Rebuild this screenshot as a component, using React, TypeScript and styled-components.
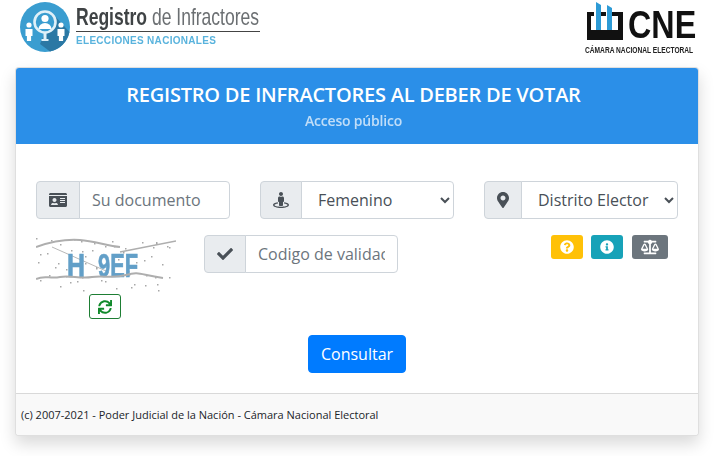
import styled, { createGlobalStyle } from "styled-components";
import {
  FaBalanceScale,
  FaCheck,
  FaIdCard,
  FaInfoCircle,
  FaMapMarkerAlt,
  FaQuestionCircle,
  FaStreetView,
  FaSync,
} from "react-icons/fa";

const GlobalStyle = createGlobalStyle`
  html, body {
    margin: 0;
    padding: 0;
    background: #fff;
    font-family: "Open Sans", "Liberation Sans", sans-serif;
    color: #212529;
  }
  * {
    box-sizing: border-box;
  }
`;

// pseudo random dots for the captcha noise, fixed so the picture doesn't move
const captchaDots = Array.from({ length: 58 }, (_, i) => ({
  x: (i * 37 + (i * i) % 23) % 140,
  y: 3 + ((i * 53 + (i * i * 3) % 17) % 55),
}));

function RegistroLogo() {
  return (
    <LogoLeft>
      <svg width="50" height="50" viewBox="0 0 50 50">
        <circle cx="25" cy="25" r="25" fill="#3a9dd0" />
        <path d="M20 42 L33 12 L49.5 30 A25 25 0 0 1 30 49.5 Z" fill="#2b78a4" />
        <circle cx="25" cy="20" r="10.5" fill="#3a9dd0" stroke="#dff0f8" strokeWidth="2.6" />
        <circle cx="25" cy="16.5" r="3.6" fill="#fff" />
        <path d="M18.5 27 a6.5 6 0 0 1 13 0 Z" fill="#fff" />
        <path d="M23.5 31 h3 v6 h2 v2 h-7 v-2 h2 Z" fill="#dff0f8" />
        <circle cx="9" cy="23" r="2.6" fill="#fff" />
        <path d="M5.5 27 h7 v7 h-1.4 v5 h-4.2 v-5 h-1.4 Z" fill="#fff" />
        <circle cx="41" cy="23" r="2.6" fill="#fff" />
        <path d="M37.5 27 h7 v7 h-1.4 v5 h-4.2 v-5 h-1.4 Z" fill="#fff" />
      </svg>
      <LogoWords>
        <LogoTitle>
          <LogoTitleText>
            <strong>Registro</strong> de Infractores
          </LogoTitleText>
        </LogoTitle>
        <LogoSub>ELECCIONES NACIONALES</LogoSub>
      </LogoWords>
    </LogoLeft>
  );
}

function CneLogo() {
  return (
    <LogoRight>
      <CneTop>
        <svg width="36" height="40" viewBox="0 0 36 40">
          <path d="M0 10 H36 V38 H0 Z M4 14 V28 H31 V14 Z" fill="#111" fillRule="evenodd" />
          <rect x="7" y="9" width="3" height="6" fill="#fff" />
          <rect x="19" y="9" width="3" height="6" fill="#fff" />
          <path d="M9 0 L14 3 V28 H9 Z" fill="#2d9bd6" />
          <path d="M20 3 L25 6 V28 H20 Z" fill="#2d9bd6" />
        </svg>
        <CneLetters>
          <span>CNE</span>
        </CneLetters>
      </CneTop>
      <CneCaption>
        <span>CÁMARA NACIONAL ELECTORAL</span>
      </CneCaption>
    </LogoRight>
  );
}

function Captcha() {
  return (
    <svg width="140" height="60" viewBox="0 0 140 60">
      {captchaDots.map((d, i) => (
        <rect key={i} x={d.x} y={d.y} width="1.5" height="1.5" fill="#a8a8a8" />
      ))}
      <path d="M0 12 C14 7 30 4 44 5 S72 11 84 12" fill="none" stroke="#aeaeae" strokeWidth="2" />
      <path d="M84 17 L140 6" fill="none" stroke="#aeaeae" strokeWidth="1.5" />
      <path d="M16 12 L70 36" fill="none" stroke="#b8b8b8" strokeWidth="1" />
      <text x="31" y="42" fontFamily="Liberation Sans" fontWeight="700" fontSize="33" fill="#629fc8" stroke="#629fc8" strokeWidth="0.7" textLength="18" lengthAdjust="spacingAndGlyphs">
        H
      </text>
      <text x="62" y="42" fontFamily="Liberation Sans" fontWeight="700" fontSize="33" fill="#629fc8" stroke="#629fc8" strokeWidth="0.7" textLength="40" lengthAdjust="spacingAndGlyphs">
        9EF
      </text>
      <path d="M0 44 C8 40 14 44 24 42 S44 44 56 42 S76 44 90 40 S104 40 127 43" fill="none" stroke="#aeaeae" strokeWidth="2" />
    </svg>
  );
}

export default function App() {
  return (
    <Page>
      <GlobalStyle />
      <TopBar>
        <RegistroLogo />
        <CneLogo />
      </TopBar>
      <Card>
        <CardHeader>
          <h1>REGISTRO DE INFRACTORES AL DEBER DE VOTAR</h1>
          <p>Acceso público</p>
        </CardHeader>
        <CardBody>
          <FieldRow>
            <InputGroup>
              <Addon $w={44}>
                <FaIdCard size={18} />
              </Addon>
              <TextField placeholder="Su documento" />
            </InputGroup>
            <InputGroup>
              <Addon $w={42}>
                <FaStreetView size={16} />
              </Addon>
              <SelectField defaultValue="F">
                <option value="F">Femenino</option>
                <option value="M">Masculino</option>
              </SelectField>
            </InputGroup>
            <InputGroup>
              <Addon $w={38}>
                <FaMapMarkerAlt size={16} />
              </Addon>
              <SelectField defaultValue="">
                <option value="">Distrito Elector</option>
              </SelectField>
            </InputGroup>
          </FieldRow>
          <CaptchaRow>
            <CaptchaColumn>
              <Captcha />
              <RefreshButton type="button">
                <FaSync size={14} />
              </RefreshButton>
            </CaptchaColumn>
            <InputGroup>
              <Addon $w={42}>
                <FaCheck size={16} />
              </Addon>
              <TextField placeholder="Codigo de validación" />
            </InputGroup>
            <HelpButtons>
              <SmallButton type="button" $bg="#ffc107">
                <FaQuestionCircle size={14} />
              </SmallButton>
              <SmallButton type="button" $bg="#17a2b8">
                <FaInfoCircle size={14} />
              </SmallButton>
              <SmallButton type="button" $bg="#6c757d" $wide>
                <FaBalanceScale size={18} />
              </SmallButton>
            </HelpButtons>
          </CaptchaRow>
          <SubmitRow>
            <SubmitButton type="button">Consultar</SubmitButton>
          </SubmitRow>
        </CardBody>
        <CardFooter>(c) 2007-2021 - Poder Judicial de la Nación - Cámara Nacional Electoral</CardFooter>
      </Card>
    </Page>
  );
}

const Page = styled.div`
  width: 717px;
  height: 456px;
  padding: 0 15px;
  overflow: hidden;
`;

const TopBar = styled.header`
  height: 67px;
  padding: 2px 7px 0 5px;
  display: flex;
  justify-content: space-between;
  align-items: flex-start;
  filter: blur(0.35px);
`;

const LogoLeft = styled.div`
  display: flex;
  gap: 6px;
`;

const LogoWords = styled.div`
  width: 184px;
  display: flex;
  flex-direction: column;
`;

const LogoTitle = styled.div`
  width: 184px;
  height: 30px;
  border-bottom: 1.5px solid #444;
`;

const LogoTitleText = styled.div`
  font-family: "Liberation Sans", sans-serif;
  font-size: 24px;
  line-height: 30px;
  color: #6b6f72;
  white-space: nowrap;
  transform: scaleX(0.73);
  transform-origin: left top;

  strong {
    color: #3f4345;
  }
`;

const LogoSub = styled.div`
  margin-top: 3px;
  font-family: "Liberation Sans", sans-serif;
  font-weight: 700;
  font-size: 10px;
  line-height: 12px;
  letter-spacing: 0.3px;
  color: #59b3dd;
  white-space: nowrap;
`;

const LogoRight = styled.div`
  width: 108px;
  display: flex;
  flex-direction: column;
`;

const CneTop = styled.div`
  display: flex;
  align-items: flex-end;
  gap: 5px;
`;

const CneLetters = styled.div`
  width: 66px;
  height: 29px;
  margin-bottom: 2px;
  font-family: "Liberation Sans", sans-serif;
  font-weight: 700;
  font-size: 38px;
  line-height: 29px;
  color: #111;

  span {
    display: inline-block;
    transform: scaleX(0.85);
    transform-origin: left center;
  }
`;

const CneCaption = styled.div`
  margin: 3px 0 0 -2px;
  width: 108px;
  overflow: hidden;
  font-family: "Liberation Sans", sans-serif;
  font-weight: 700;
  font-size: 8.5px;
  line-height: 10px;
  color: #222;
  white-space: nowrap;

  span {
    display: inline-block;
    transform: scaleX(0.78);
    transform-origin: left center;
  }
`;

const Card = styled.section`
  width: 684px;
  height: 369px;
  display: flex;
  flex-direction: column;
  border: 1px solid rgba(0, 0, 0, 0.125);
  border-radius: 4px;
  box-shadow: 0 8px 16px rgba(0, 0, 0, 0.15);
  background: #fff;
`;

const CardHeader = styled.div`
  height: 76px;
  padding: 12px 7px 0 0;
  background: #2b8fe8;
  border-radius: 3px 3px 0 0;
  color: #fff;
  text-align: center;

  h1 {
    margin: 0;
    font-size: 20px;
    line-height: 30px;
    font-weight: 600;
    letter-spacing: -0.23px;
  }

  p {
    margin: 0;
    font-size: 14px;
    line-height: 21px;
    font-weight: 600;
    letter-spacing: -0.2px;
    opacity: 0.7;
  }
`;

const CardBody = styled.div`
  flex: 1;
  padding: 37px 20px 0;
`;

const FieldRow = styled.div`
  display: flex;
  gap: 30px;
`;

const InputGroup = styled.div`
  width: 194px;
  height: 38px;
  display: flex;
`;

const Addon = styled.span<{ $w: number }>`
  width: ${(p) => p.$w}px;
  flex: none;
  display: flex;
  align-items: center;
  justify-content: center;
  background: #e9ecef;
  border: 1px solid #ced4da;
  border-radius: 4px 0 0 4px;
  color: #495057;
`;

const TextField = styled.input`
  flex: 1;
  min-width: 0;
  margin-left: -1px;
  padding: 6px 12px;
  border: 1px solid #ced4da;
  border-radius: 0 4px 4px 0;
  background: #fff;
  font-family: inherit;
  font-size: 16px;
  color: #495057;

  &::placeholder {
    color: #6c757d;
    opacity: 1;
  }
`;

const SelectField = styled.select`
  flex: 1;
  min-width: 0;
  margin-left: -1px;
  padding: 6px 0 6px 12px;
  border: 1px solid #ced4da;
  border-radius: 0 4px 4px 0;
  background: #fff;
  font-family: inherit;
  font-size: 16px;
  color: #495057;
`;

const CaptchaRow = styled.div`
  margin-top: 16px;
  display: flex;
  align-items: flex-start;
`;

const CaptchaColumn = styled.div`
  width: 168px;
  flex: none;
  display: flex;
  flex-direction: column;
  align-items: center;
  padding-right: 28px;
  filter: blur(0.3px);
`;

const RefreshButton = styled.button`
  width: 32px;
  height: 25px;
  margin: -1px 2px 0 0;
  padding: 0;
  display: flex;
  align-items: center;
  justify-content: center;
  background: #fff;
  border: 1px solid #1e7e34;
  border-radius: 3px;
  color: #118a2b;
`;

const HelpButtons = styled.div`
  margin-left: auto;
  margin-right: 10px;
  display: flex;
  gap: 8px;

  button:last-child {
    margin-left: 1px;
  }
`;

const SmallButton = styled.button<{ $bg: string; $wide?: boolean }>`
  width: ${(p) => (p.$wide ? "36px" : "32px")};
  height: 24px;
  padding: 0;
  display: flex;
  align-items: center;
  justify-content: center;
  background: ${(p) => p.$bg};
  border: none;
  border-radius: 3px;
  color: #fff;
`;

const SubmitRow = styled.div`
  margin-top: 16px;
  display: flex;
  justify-content: center;
`;

const SubmitButton = styled.button`
  width: 98px;
  height: 38px;
  padding: 0;
  background: #007bff;
  border: 1px solid #007bff;
  border-radius: 4px;
  font-family: inherit;
  font-size: 16px;
  color: #fff;
`;

const CardFooter = styled.footer`
  height: 42px;
  padding: 0 5px;
  display: flex;
  align-items: center;
  background: #f9f9f9;
  border-top: 1px solid rgba(0, 0, 0, 0.125);
  border-radius: 0 0 3px 3px;
  font-size: 11px;
  color: #212529;
`;
